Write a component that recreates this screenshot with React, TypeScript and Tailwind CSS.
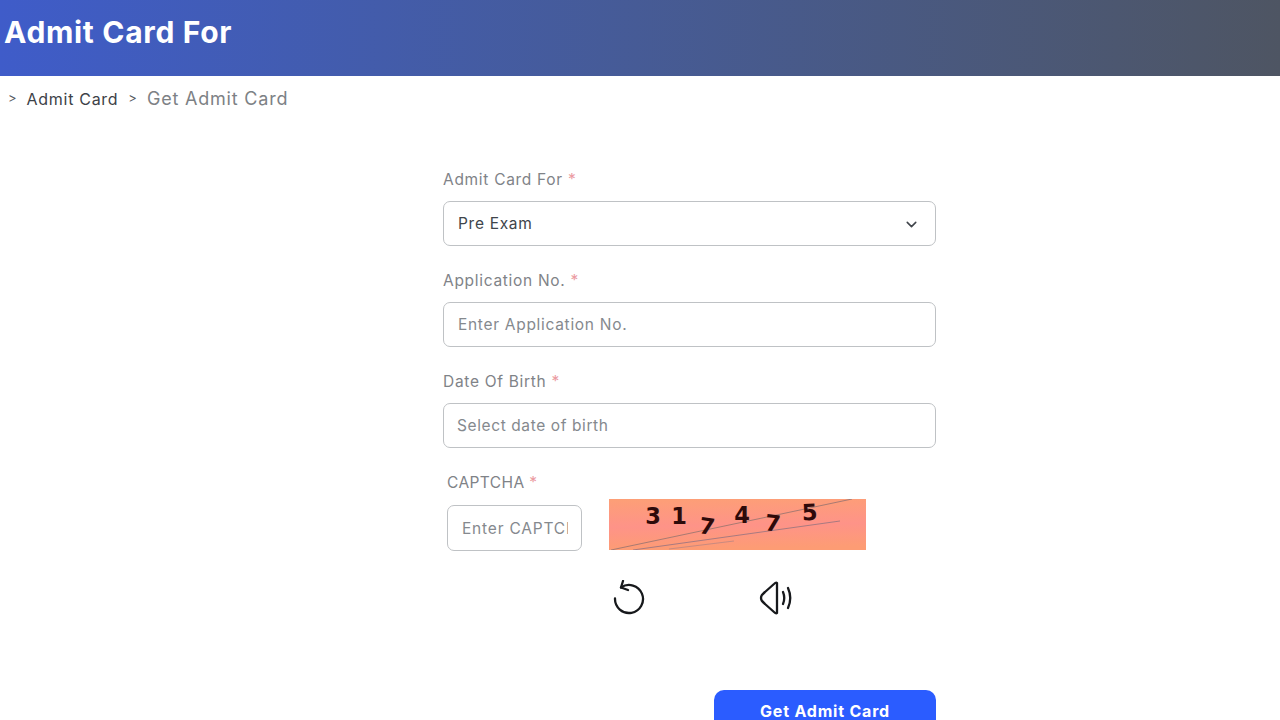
import { ChevronDown } from "lucide-react";

function Star() {
  return <span className="text-[#eb9aa1]"> *</span>;
}

function Field({ label, children }: { label: string; children: React.ReactNode }) {
  return (
    <div className="h-[101px]">
      <div className="h-[22px] pt-[1px] text-[15.5px] leading-[22px] tracking-[0.7px] text-[#7f8388]">
        {label}
        <Star />
      </div>
      <div className="mt-[11px] flex h-[45px] items-center justify-between rounded-[7px] border border-[#bfc2c5] pl-[14px] pr-[15px] pt-[1px] text-[15.5px] tracking-[0.7px]">
        {children}
      </div>
    </div>
  );
}

function Captcha() {
  const digits = [
    { d: "3", x: 44, y: 25, r: 0 },
    { d: "1", x: 70, y: 25, r: 0 },
    { d: "7", x: 97, y: 35, r: 8 },
    { d: "4", x: 133, y: 24, r: 0 },
    { d: "7", x: 163, y: 32, r: 6 },
    { d: "5", x: 201, y: 21, r: -3 },
  ];
  return (
    <svg width="257" height="51" viewBox="0 0 257 51" className="block">
      <defs>
        <linearGradient id="cap" x1="0" y1="0" x2="0.08" y2="1">
          <stop offset="0" stopColor="#fd9f76" />
          <stop offset="0.55" stopColor="#fe9388" />
          <stop offset="1" stopColor="#fd9c74" />
        </linearGradient>
      </defs>
      <rect width="257" height="51" fill="url(#cap)" />
      <path d="M2 51 L243 0" stroke="#a87a72" strokeWidth="1" fill="none" />
      <path d="M24 51 L231 22" stroke="#a87a80" strokeWidth="1" fill="none" />
      <path d="M60 50 L125 42" stroke="#c98a80" strokeWidth="1" fill="none" />
      {digits.map((c, i) => (
        <text
          key={i}
          x={c.x}
          y={c.y}
          textAnchor="middle"
          transform={`rotate(${c.r} ${c.x} ${c.y})`}
          fontFamily="'DejaVu Sans', sans-serif"
          fontWeight="700"
          fontSize="22.5"
          fill="#2e0a0a"
        >
          {c.d}
        </text>
      ))}
    </svg>
  );
}

export default function App() {
  return (
    <div className="h-[720px] overflow-hidden bg-white font-['Inter',sans-serif]">
      <header className="flex h-[76px] items-start bg-gradient-to-r from-[#3f5cc9] to-[#4e5563] pl-[4px] pt-[13px]">
        <h1 className="text-[30px] font-bold leading-[38px] tracking-[0.68px] text-white">Admit Card For</h1>
      </header>

      <nav className="flex h-[44px] items-center pt-[1px] pl-[8px] text-[#555a60]">
        <span className="text-[13px]">&gt;</span>
        <span className="ml-[10px] text-[16px] tracking-[0.7px] text-[#3d4247]">Admit Card</span>
        <span className="ml-[10px] text-[13px]">&gt;</span>
        <span className="ml-[10px] text-[18px] tracking-[0.8px] text-[#7d8185]">Get Admit Card</span>
      </nav>

      <main className="ml-[443px] w-[493px] pt-[48px]">
        <Field label="Admit Card For">
          <span className="text-[#40454b]">Pre Exam</span>
          <ChevronDown size={17} strokeWidth={2.2} className="text-[#40454b]" />
        </Field>
        <Field label="Application No.">
          <span className="text-[#85898e]">Enter Application No.</span>
        </Field>
        <Field label="Date Of Birth">
          <span className="-ml-[1px] text-[#85898e] tracking-[0.6px]">Select date of birth</span>
        </Field>

        <div className="pl-[4px]">
          <div className="mb-[12px] h-[22px] pt-[1px] text-[15.5px] leading-[22px] tracking-[0.4px] text-[#7f8388]">
            CAPTCHA
            <Star />
          </div>
          <div className="flex items-start">
            <div className="flex h-[46px] w-[135px] items-center overflow-hidden whitespace-nowrap rounded-[7px] border border-[#bfc2c5] pl-[14px] pr-[13px] pt-[1px] text-[15.5px] tracking-[0.8px] text-[#85898e]">
              <span className="block w-[106px] overflow-hidden">Enter CAPTCHA</span>
            </div>
            <div className="ml-[27px] -mt-[6px]">
              <Captcha />
              <div className="mt-[30px] flex items-center pl-[4px]">
                <svg width="32" height="36" viewBox="0 0 32 36" fill="none" stroke="#17191c" strokeWidth="2.3" strokeLinecap="round" strokeLinejoin="round">
                  <path d="M8 7.5 A14 14 0 1 1 2 18.5" />
                  <path d="M10 1 L8 7.5 L15 10" />
                </svg>
                <svg className="ml-[114px]" width="36" height="36" viewBox="0 0 36 36" fill="none" stroke="#17191c" strokeWidth="2.3" strokeLinecap="round" strokeLinejoin="round">
                  <path d="M18 3 V33 Q17 34 15 32 L6 24 Q2 21 2 18 Q2 15 6 12 L15 4 Q17 2 18 3 Z" />
                  <path d="M24 12 Q26.5 18 24 24" />
                  <path d="M29 8 Q33.5 18 29 28" />
                </svg>
              </div>
              <div className="mt-[74px] ml-[105px] flex h-[44px] w-[222px] justify-center rounded-t-[10px] bg-[#2b5cff] pt-[10px] text-[16px] font-bold leading-[22px] tracking-[0.8px] text-white">
                Get Admit Card
              </div>
            </div>
          </div>
        </div>
      </main>
    </div>
  );
}
